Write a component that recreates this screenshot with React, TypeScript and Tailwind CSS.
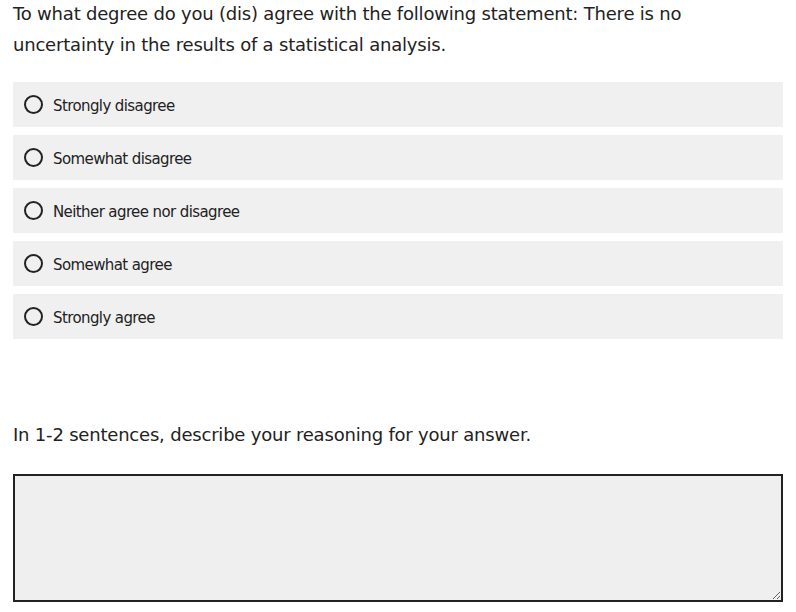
import React, { useState } from "react";

const options = [
  "Strongly disagree",
  "Somewhat disagree",
  "Neither agree nor disagree",
  "Somewhat agree",
  "Strongly agree",
];

export default function App() {
  const [choice, setChoice] = useState<number | null>(null);

  return (
    <main className="w-full bg-white px-[13px] pt-0 text-[#222] font-['DejaVu_Sans',sans-serif]">
      <p className="-mt-[2px] text-[18px] leading-[31px] tracking-[-0.2px]">
        To what degree do you (dis) agree with the following statement: There is no uncertainty in the
        results of a statistical analysis.
      </p>
      <div className="mt-[22px] flex flex-col gap-2">
        {options.map((o, i) => (
          <label
            key={o}
            className="flex h-[45px] cursor-pointer items-center gap-[10px] bg-[#f0f0f0] pl-[11px] pt-[3px] text-[15px] tracking-[-0.6px]"
            onClick={() => setChoice(i)}
          >
            <span className="-mt-[3px] flex h-[19px] w-[19px] items-center justify-center rounded-full border-2 border-[#222]">
              {choice === i && <span className="h-[9px] w-[9px] rounded-full bg-[#222]" />}
            </span>
            {o}
          </label>
        ))}
      </div>
      <p className="mt-[80px] text-[18px] leading-[31px] tracking-[-0.2px]">
        In 1-2 sentences, describe your reasoning for your answer.
      </p>
      <textarea className="mt-[24px] block h-[128px] w-full border-2 border-[#222] bg-[#efefef] outline-none" />
    </main>
  );
}
